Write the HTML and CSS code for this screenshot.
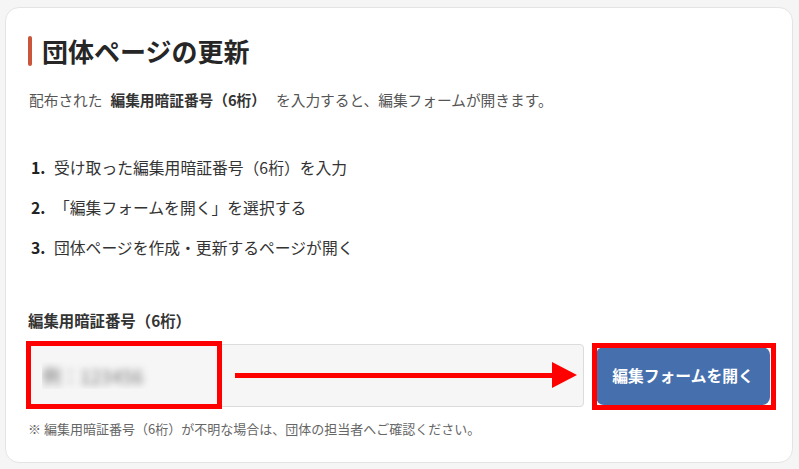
FILE: index.html
```html
<!DOCTYPE html>
<html lang="ja">

<head>
    <meta charset="UTF-8">
    <meta name="viewport" content="width=device-width, initial-scale=1.0">
    <title>団体ページの更新</title>
    <link rel="stylesheet" href="styles.css">
</head>

<body>

    <article class="card">
        <h1 class="card-title">団体ページの更新</h1>

        <p class="lead">配布された<strong>編集用暗証番号（6桁）</strong>を入力すると、編集フォームが開きます。</p>

        <ol class="steps">
            <li><span class="num">1.</span>受け取った編集用暗証番号（6桁）を入力</li>
            <li><span class="num">2.</span>「編集フォームを開く」を選択する</li>
            <li><span class="num">3.</span>団体ページを作成・更新するページが開く</li>
        </ol>

        <label class="field-label" for="code">編集用暗証番号（6桁）</label>

        <div class="field-row">
            <input id="code" class="code-input" type="text" placeholder="例：123456">
            <button class="open-btn">編集フォームを開く</button>

            <!-- annotations -->
            <span class="mark mark-input"></span>
            <svg class="arrow" width="342" height="26" viewBox="0 0 342 26">
                <rect x="0" y="11" width="320" height="5" fill="#ff0000"></rect>
                <polygon points="317,0 342,13 317,26" fill="#ff0000"></polygon>
            </svg>
            <span class="mark mark-btn"></span>
        </div>

        <p class="note">※ 編集用暗証番号（6桁）が不明な場合は、団体の担当者へご確認ください。</p>
    </article>

</body>

</html>
```

FILE: styles.css
```css
body {
    margin: 0;
    background-color: #f5f5f5;
    font-family: "Noto Sans CJK JP", "Noto Sans", sans-serif;
    color: #333;
}

.card {
    margin: 7px 6px 6px 5px;
    padding: 26px 22px 23px 22px;
    background-color: #fff;
    border: 1px solid #e4e4e4;
    border-radius: 14px;
}

.card-title {
    display: flex;
    align-items: center;
    gap: 10px;
    margin: 0;
    font-size: 26px;
    line-height: 34px;
    font-weight: 700;
    color: #262626;
}

.card-title::before {
    content: "";
    width: 4px;
    height: 30px;
    border-radius: 2px;
    background-color: #c9553a;
}

.lead {
    margin: 20px 0 0 1px;
    font-size: 14.7px;
    line-height: 24px;
    color: #555;
}

.lead strong {
    margin: 0 10px 0 8px;
    color: #333;
    font-weight: 700;
}

.steps {
    list-style: none;
    margin: 44px 0 0 0;
    padding: 0 0 0 3px;
    display: flex;
    flex-direction: column;
    gap: 16px;
}

.steps li {
    display: flex;
    font-size: 15.8px;
    line-height: 24px;
    color: #333;
}

.steps .num {
    width: 23px;
    font-weight: 700;
    color: #222;
}

.field-label {
    display: block;
    margin-top: 49px;
    font-size: 15.4px;
    line-height: 22px;
    font-weight: 700;
    color: #333;
}

.field-row {
    position: relative;
    display: flex;
    align-items: center;
    gap: 12px;
    margin-top: 13px;
}

.code-input {
    flex: 1;
    box-sizing: border-box;
    height: 63px;
    padding: 0 13px;
    border: 1px solid #dcdcdc;
    border-radius: 4px;
    background-color: #f6f6f7;
    font-family: inherit;
    font-size: 19px;
}

.code-input::placeholder {
    color: transparent;
    text-shadow: 0 0 7px #777;
}

.open-btn {
    width: 174px;
    height: 58px;
    border: none;
    border-radius: 8px;
    background-color: #4670ad;
    color: #fff;
    font-family: inherit;
    font-size: 15.8px;
    font-weight: 700;
}

.mark {
    position: absolute;
    box-sizing: border-box;
    border: 5px solid #ff0000;
}

.mark-input {
    left: -2px;
    top: -3px;
    width: 196px;
    height: 68px;
}

.mark-btn {
    left: 564px;
    top: -1px;
    width: 184px;
    height: 67px;
}

.arrow {
    position: absolute;
    left: 207px;
    top: 18px;
}

.note {
    margin: 12px 0 0 0;
    font-size: 13px;
    line-height: 20px;
    color: #666;
}
```
